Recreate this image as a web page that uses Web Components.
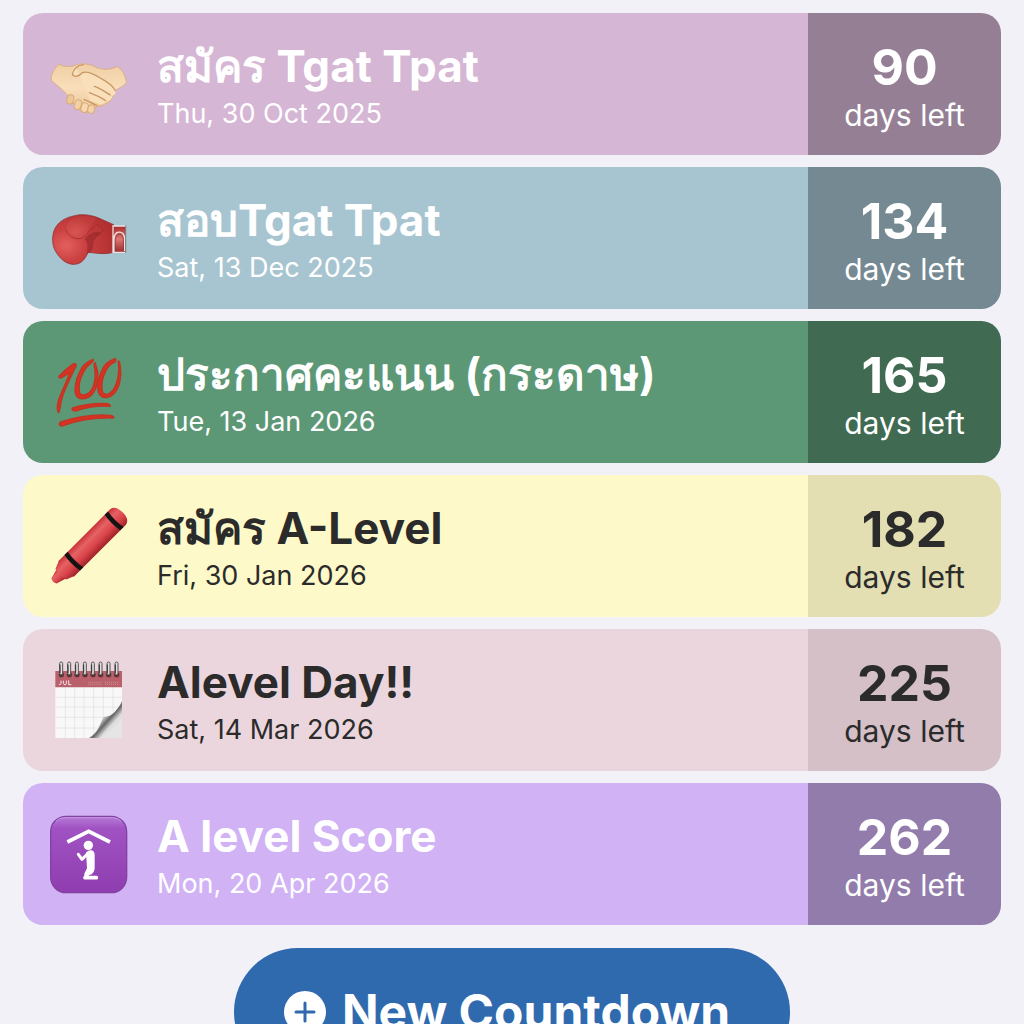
<!DOCTYPE html>
<html lang="th">
<head>
<meta charset="utf-8">
<meta name="viewport" content="width=device-width, initial-scale=1">
<title>Countdowns</title>
<style>
    body {
        margin: 0;
        background: #f2f1f8;
        font-family: Inter, "Noto Sans", "Liberation Sans", sans-serif;
    }
</style>
</head>
<body>
<countdown-app>
    <countdown-card color="#d6b6d5" days="90" date="Thu, 30 Oct 2025">
        <svg slot="icon" viewBox="0 -18 300 300" aria-hidden="true">
            <defs>
                <linearGradient id="skin" x1="0" y1="0" x2="0" y2="1">
                    <stop offset="0" stop-color="#f0cfa4"/>
                    <stop offset=".5" stop-color="#f8deba"/>
                    <stop offset="1" stop-color="#ecc494"/>
                </linearGradient>
            </defs>
            <g stroke="#c99766" stroke-width="3" stroke-linejoin="round" stroke-linecap="round">
                <path fill="url(#skin)" stroke="#dcb083" d="M58 73C73 82 89 80 104 77C118 68 145 71 162 79C184 91 207 91 231 80C247 87 258 110 259 129C247 141 235 145 226 151C224 164 218 174 211 183L190 195L164 203C164 215 152 221 143 215C134 222 121 216 121 208C110 211 100 201 103 190C90 193 81 181 84 168C73 152 54 139 35 122C30 108 43 83 58 73Z"/>
                <path fill="#f9dfba" d="M106 78C95 88 94 99 98 108C108 114 121 107 127 97C140 91 153 96 160 101C181 111 207 127 225 151C230 163 220 169 215 165C217 178 206 184 198 181C196 192 184 195 176 191L150 181" stroke="none"/>
                <path fill="none" stroke-width="4" d="M130 74C113 75 99 88 97 102C101 114 119 109 127 98C145 90 171 108 184 116C204 127 220 139 225 151M163 139C181 144 196 157 211 165M148 158C167 165 182 172 196 181M132 178C146 183 158 191 171 197"/>
                <g stroke="#d8aa7b">
                    <rect x="81" y="164" width="20" height="28" rx="10" fill="#efc898" transform="rotate(14 91 177)"/>
                    <rect x="104" y="179" width="20" height="30" rx="10" fill="#f3d0a4" transform="rotate(16 114 193)"/>
                    <rect x="124" y="188" width="20" height="29" rx="10" fill="#f7d8af" transform="rotate(14 133 202)"/>
                    <rect x="144" y="195" width="20" height="25" rx="10" fill="#f5d3a8" transform="rotate(14 154 206)"/>
                </g>
            </g>
        </svg>
        สมัคร Tgat Tpat
    </countdown-card>

    <countdown-card color="#a7c5d1" days="134" date="Sat, 13 Dec 2025">
        <svg slot="icon" viewBox="0 -6 300 300" aria-hidden="true">
            <defs>
                <radialGradient id="glove" cx=".22" cy=".62" r=".8">
                    <stop offset="0" stop-color="#e3605f"/>
                    <stop offset=".4" stop-color="#cb4142"/>
                    <stop offset="1" stop-color="#b12f30"/>
                </radialGradient>
                <radialGradient id="thumb" cx=".3" cy=".7" r=".7">
                    <stop offset="0" stop-color="#d95554"/>
                    <stop offset="1" stop-color="#bf3a3a"/>
                </radialGradient>
                <linearGradient id="cuff" x1="0" y1="0" x2="0" y2="1">
                    <stop offset="0" stop-color="#a82a2a"/>
                    <stop offset=".5" stop-color="#e27370"/>
                    <stop offset="1" stop-color="#9a2c2b"/>
                </linearGradient>
            </defs>
            <path fill="url(#cuff)" d="M219 108H255V187H219Z"/>
            <path fill="url(#glove)" stroke="#8c2423" stroke-width="2" d="M42 122C52 95 79 81 105 77C127 70 157 76 176 84L221 104V187C197 194 170 190 145 187C136 202 130 220 105 223C77 225 58 204 45 181C36 163 36 140 42 122Z"/>
            <path fill="#8a2024" opacity=".5" d="M134 148C145 128 168 121 187 129C170 140 158 150 160 167C160 180 150 188 140 191C145 170 142 156 134 148Z"/>
            <path fill="url(#thumb)" d="M83 99C75 118 81 136 100 145C119 150 136 142 140 130C146 113 160 101 168 85C137 75 99 75 83 99Z"/>
            <path fill="none" stroke="#942624" stroke-width="3" opacity=".6" d="M78 121C85 138 101 148 121 146C139 139 144 123 166 108M167 103C183 106 191 115 187 126"/>
            <path fill="none" stroke="#ece3e0" stroke-width="4" d="M219 106V189M217 108H258M217 187H258M222 185V147C223 121 251 119 254 145V183"/>
            <path fill="none" stroke="#6b4343" stroke-width="2" d="M226 180V148C228 129 247 129 250 146V181M257 106V189"/>
        </svg>
        สอบTgat Tpat
    </countdown-card>

    <countdown-card color="#5c9876" days="165" date="Tue, 13 Jan 2026">
        <svg slot="icon" viewBox="0 -9 300 300" aria-hidden="true">
            <g fill="#d63323" stroke="#c23524" stroke-width="4" stroke-linejoin="round">
                <path d="M58 92C72 79 87 64 102 56C108 55 110 59 107 65C91 100 73 134 64 166C61 183 60 196 56 203C50 195 51 178 57 161C67 134 80 111 89 83C79 89 68 98 59 99C56 97 56 94 58 92Z"/>
                <path d="M157 44C143 49 128 61 119 80C105 108 101 141 110 154C119 166 143 163 156 149C173 130 178 91 170 68C166 60 168 51 163 54C160 59 164 68 165 79C168 103 160 134 146 144C136 151 123 153 119 143C115 127 120 101 131 80C139 65 151 55 158 50C161 45 160 42 157 44Z"/>
                <path d="M225 41C206 47 193 58 185 77C172 106 169 137 180 150C190 162 208 160 221 147C239 130 246 93 241 64C239 51 237 46 235 49C234 54 237 62 236 77C235 106 224 134 211 143C202 151 190 149 187 139C183 121 188 96 199 75C207 60 217 54 226 50C229 46 228 41 225 41Z"/>
                <path d="M98 189C129 179 168 174 203 176C209 178 213 183 210 184C171 181 135 188 107 198C98 199 93 193 98 189Z"/>
                <path d="M62 231C111 215 169 207 213 211C220 214 224 217 220 219C168 217 113 226 70 242C59 246 53 236 62 231Z"/>
            </g>
        </svg>
        ประกาศคะแนน (กระดาษ)
    </countdown-card>

    <countdown-card color="#fdf9c8" days="182" date="Fri, 30 Jan 2026" tone="dark">
        <svg slot="icon" viewBox="0 3 300 300" aria-hidden="true">
            <defs>
                <linearGradient id="wax" x1="0" y1="0" x2="0" y2="1">
                    <stop offset="0" stop-color="#c9343a"/>
                    <stop offset=".3" stop-color="#e66264"/>
                    <stop offset=".65" stop-color="#d9444a"/>
                    <stop offset="1" stop-color="#9e2228"/>
                </linearGradient>
            </defs>
            <g transform="translate(40 260) rotate(-45)">
                <path fill="url(#wax)" d="M3 -11Q-5 0 3 11L35 20V-20Z"/>
                <path fill="url(#wax)" d="M32 -23Q26 0 32 23L58 33V-33Z"/>
                <path fill="url(#wax)" d="M54 -33H275Q294 -30 294 0T275 33H54Q48 0 54 -33Z"/>
                <path fill="#151313" d="M80 -33H94Q88 0 94 33H80Q74 0 80 -33ZM251 -33H265Q259 0 265 33H251Q245 0 251 -33Z"/>
            </g>
        </svg>
        สมัคร A-Level
    </countdown-card>

    <countdown-card color="#ecd6dd" days="225" date="Sat, 14 Mar 2026" tone="dark">
        <svg slot="icon" viewBox="0 3 300 300" aria-hidden="true">
            <defs>
                <linearGradient id="curl" x1="0" y1="0" x2="1" y2="1">
                    <stop offset=".2" stop-color="#ffffff"/>
                    <stop offset=".42" stop-color="#e6e6e6"/>
                    <stop offset=".55" stop-color="#666666"/>
                    <stop offset=".67" stop-color="#dddddd"/>
                    <stop offset="1" stop-color="#f4f4f4"/>
                </linearGradient>
                <g id="ring">
                    <circle cx="64" cy="77" r="8" fill="#573637"/>
                    <rect x="59" y="39" width="9" height="38" rx="4.500" fill="#dedede" stroke="#555555" stroke-width="3"/>
                    <path d="M60 47V72" stroke="#333333" stroke-width="3"/>
                </g>
            </defs>
            <path fill="#f8f8f8" d="M46 113H246V267H46Z"/>
            <path fill="none" stroke="#dedfe1" stroke-width="2" d="M76 114V267M104 114V267M132 114V267M161 114V267M190 114V267M219 114V267M46 145H246M46 174H246M46 205H246M46 237H246"/>
            <path fill="#b9606a" d="M46 66H246V115H46Z"/>
            <path fill="none" stroke="#f5e4e4" stroke-width="3" d="M63 95V103Q63 107 57 107M70 95V103Q71 107 75 107Q79 107 79 103V95M86 94V107H94"/>
            <path fill="none" stroke="#d29299" stroke-width="3" stroke-dasharray="3 3" d="M145 100H187M145 106H187M195 100H238M195 106H238"/>
            <path fill="url(#curl)" d="M146 267C173 253 181 227 190 202C210 208 232 186 246 156V267Z"/>
            <path fill="#e5e5e5" d="M184 267C208 245 232 233 246 210V267Z"/>
            <use href="#ring"/>
            <use href="#ring" x="24"/>
            <use href="#ring" x="47"/>
            <use href="#ring" x="71"/>
            <use href="#ring" x="95"/>
            <use href="#ring" x="118"/>
            <use href="#ring" x="142"/>
            <use href="#ring" x="166"/>
        </svg>
        Alevel Day!!
    </countdown-card>

    <countdown-card color="#d0b2f5" days="262" date="Mon, 20 Apr 2026">
        <svg slot="icon" viewBox="0 0 300 300" aria-hidden="true">
            <defs>
                <linearGradient id="tile" x1="0" y1="0" x2="0" y2="1">
                    <stop offset="0" stop-color="#b57bd8"/>
                    <stop offset=".16" stop-color="#a052c2"/>
                    <stop offset="1" stop-color="#8f3db0"/>
                </linearGradient>
            </defs>
            <rect x="32" y="37" width="228" height="229" rx="46" fill="url(#tile)" stroke="#82429f" stroke-width="4"/>
            <path fill="none" stroke="#cfa6e8" stroke-width="3" opacity=".7" d="M48 52Q57 41 75 41H217Q235 41 244 52"/>
            <g fill="none" stroke="#ffffff">
                <path stroke-width="11" d="M82 114L146 82L210 114"/>
                <path stroke-width="9" stroke-linecap="round" stroke-linejoin="round" d="M115 151L126 166L142 150"/>
                <path stroke-width="11" stroke-linecap="round" stroke-linejoin="round" d="M150 200L135 221H169"/>
            </g>
            <circle cx="145" cy="124" r="14" fill="#ffffff"/>
            <path fill="#ffffff" d="M138 146Q144 138 154 139Q164 141 164 153V195Q163 203 155 211L139 215L132 211L141 193Z"/>
        </svg>
        A level Score
    </countdown-card>
</countdown-app>

<script>
class CountdownApp extends HTMLElement {
    constructor() {
        super();
        this.attachShadow({ mode: "open" });
    }

    connectedCallback() {
        this.shadowRoot.innerHTML = `
            <style>${this.getStyle()}</style>
            <main>
                <slot></slot>
            </main>
            <add-button>New Countdown</add-button>
        `;
    }

    getStyle() {
        return `
            :host {
                display: flex;
                flex-direction: column;
                gap: 23px;
                box-sizing: border-box;
                height: 100vh;
                padding: 13px 23px 0;
                overflow: hidden;
            }
            main {
                display: flex;
                flex: none;
                flex-direction: column;
                gap: 12px;
            }
            add-button {
                align-self: center;
            }
        `;
    }
}

class CountdownCard extends HTMLElement {
    constructor() {
        super();
        this.attachShadow({ mode: "open" });
    }

    connectedCallback() {
        this.shadowRoot.innerHTML = `
            <style>${this.getStyle()}</style>
            <article>
                <slot name="icon"></slot>
                <div class="event">
                    <h2><slot></slot></h2>
                    <time>${this.getAttribute("date")}</time>
                </div>
                <div class="left">
                    <strong>${this.getAttribute("days")}</strong>
                    <span>days left</span>
                </div>
            </article>
        `;
    }

    getStyle() {
        return `
            :host {
                display: block;
                color: #ffffff;
                --shade: rgba(0, 0, 0, 0.3);
            }
            :host([tone="dark"]) {
                color: #2b2b2b;
                --shade: rgba(0, 0, 0, 0.1);
            }
            article {
                display: flex;
                min-height: 142px;
                border-radius: 20px;
                overflow: hidden;
                background: ${this.getAttribute("color")};
            }
            ::slotted(svg) {
                flex: none;
                align-self: center;
                width: 100px;
                height: 100px;
                margin: 0 17px;
            }
            .event, .left {
                display: flex;
                flex-direction: column;
                justify-content: center;
                gap: 4px;
            }
            .event {
                flex: 1;
                min-width: 0;
            }
            h2 {
                margin: 0;
                font-size: 44px;
                font-weight: 700;
                line-height: 56px;
            }
            time {
                font-size: 27px;
                line-height: 32px;
            }
            .left {
                flex: none;
                gap: 0;
                align-items: center;
                box-sizing: border-box;
                width: 193px;
                padding-top: 1px;
                background: var(--shade);
            }
            strong {
                font-size: 50px;
                font-weight: 700;
                line-height: 60px;
            }
            span {
                font-size: 30px;
                line-height: 36px;
            }
        `;
    }
}

class AddButton extends HTMLElement {
    constructor() {
        super();
        this.attachShadow({ mode: "open" });
    }

    connectedCallback() {
        this.shadowRoot.innerHTML = `
            <style>${this.getStyle()}</style>
            <button type="button">
                <svg viewBox="0 0 42 42" aria-hidden="true">
                    <circle cx="21" cy="21" r="21" fill="#ffffff"/>
                    <path d="M21 12V30M12 21H30" stroke="#2f69ae" stroke-width="3" stroke-linecap="round"/>
                </svg>
                <slot></slot>
            </button>
        `;
    }

    getStyle() {
        return `
            :host {
                display: block;
                flex: none;
            }
            button {
                display: flex;
                align-items: center;
                gap: 16px;
                height: 128px;
                padding: 0 60px 0 50px;
                border: 0;
                border-radius: 64px;
                background: #2f69ae;
                color: #ffffff;
                font: 700 48px/60px Inter, "Noto Sans", sans-serif;
                white-space: nowrap;
                cursor: pointer;
            }
            svg {
                width: 42px;
                height: 42px;
            }
        `;
    }
}

customElements.define("add-button", AddButton);
customElements.define("countdown-card", CountdownCard);
customElements.define("countdown-app", CountdownApp);
</script>
</body>
</html>
